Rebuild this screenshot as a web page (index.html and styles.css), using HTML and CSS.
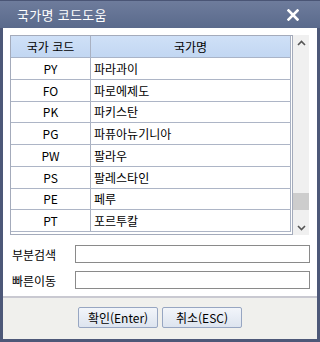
FILE: index.html
```html
<!DOCTYPE html>
<html lang="ko">
<head>
<meta charset="utf-8">
<link rel="stylesheet" href="styles.css">
</head>
<body>
<div class="win">
  <div class="title">
    <span class="title-text">국가명 코드도움</span>
    <svg class="close" width="12" height="12" viewBox="0 0 12 12"><path d="M1.5 1.5 L10.5 10.5 M10.5 1.5 L1.5 10.5" stroke="#fff" stroke-width="2.6" stroke-linecap="square"/></svg>
  </div>
  <div class="content">
    <div class="gridwrap">
      <div class="grid">
        <div class="row head"><div class="c1">국가 코드</div><div class="c2 center">국가명</div></div>
        <div class="row"><div class="c1">PY</div><div class="c2">파라과이</div></div>
        <div class="row"><div class="c1">FO</div><div class="c2">파로에제도</div></div>
        <div class="row"><div class="c1">PK</div><div class="c2">파키스탄</div></div>
        <div class="row"><div class="c1">PG</div><div class="c2">파퓨아뉴기니아</div></div>
        <div class="row"><div class="c1">PW</div><div class="c2">팔라우</div></div>
        <div class="row"><div class="c1">PS</div><div class="c2">팔레스타인</div></div>
        <div class="row"><div class="c1">PE</div><div class="c2">페루</div></div>
        <div class="row"><div class="c1">PT</div><div class="c2">포르투칼</div></div>
      </div>
      <div class="scroll">
        <svg class="arrow" width="9" height="6" viewBox="0 0 9 6"><path d="M1 5 L4.5 1.5 L8 5" fill="none" stroke="#555" stroke-width="1.6"/></svg>
        <div class="track"><div class="thumb"></div></div>
        <svg class="arrow" width="9" height="6" viewBox="0 0 9 6"><path d="M1 1 L4.5 4.5 L8 1" fill="none" stroke="#555" stroke-width="1.6"/></svg>
      </div>
    </div>
    <div class="form">
      <div class="frow"><span class="lbl">부분검색</span><div class="inp"></div></div>
      <div class="frow"><span class="lbl">빠른이동</span><div class="inp"></div></div>
    </div>
    <div class="footer">
      <button class="btn">확인(Enter)</button>
      <button class="btn">취소(ESC)</button>
    </div>
  </div>
</div>
</body>
</html>
```
FILE: styles.css
```css
* { box-sizing: border-box; }
html, body { margin: 0; padding: 0; }
body { font-family: "Noto Sans CJK KR", "Noto Sans", sans-serif; font-size: 12px; color: #000; }
.win {
  width: 320px; height: 342px;
  background: #4d5878;
  display: flex; flex-direction: column;
  padding-bottom: 3px;
}
.title {
  height: 28px; flex: none;
  background: linear-gradient(#6e7c9c, #5a6a8c);
  border-top: 1px solid #4a5575;
  display: flex; align-items: center; justify-content: space-between;
  padding: 0 21px 0 17px;
  color: #fff;
}
.title-text { font-size: 13px; letter-spacing: 0.3px; }
.close { display: block; }
.content {
  flex: 1; margin: 0 3px;
  background: #fff;
  display: flex; flex-direction: column;
}
.gridwrap {
  margin: 7px 8px 0 7px;
  height: 200px;
  display: flex;
}
.grid {
  width: 284px;
  border: 1px solid #a4abbb;
  padding: 0 1px 1px 0;
  display: flex; flex-direction: column;
}
.row {
  display: flex;
  height: 21.75px;
  border-bottom: 1px solid #adb5c6;
  align-items: center;
}
.row.head {
  height: 22px;
  background: linear-gradient(#cfe0f7, #c2d7f2);
  border-bottom: 1px solid #a9b4c8;
}
.c1 {
  width: 80px; height: 100%;
  border-right: 1px solid #a9b1c2;
  display: flex; align-items: center; justify-content: center;
  font-size: 12px;
}
.c2 {
  flex: 1; height: 100%;
  border-right: 1px solid #a9b1c2;
  display: flex; align-items: center;
  padding-left: 3px;
}
.c2.center { justify-content: center; padding-left: 0; }
.scroll {
  width: 16px; margin-left: 0;
  height: 200px;
  background: #f0f0f0;
  display: flex; flex-direction: column; align-items: center;
  padding: 5px 0 4px;
}
.arrow { display: block; flex: none; }
.track { flex: 1; width: 16px; position: relative; }
.thumb { position: absolute; left: 0; right: 0; top: 147px; height: 17px; background: #cdcdcd; }
.form {
  padding: 10px 7px 0 9px;
  display: flex; flex-direction: column; gap: 8px;
  height: 61px;
}
.frow { display: flex; align-items: center; height: 18px; }
.lbl { width: 63px; font-size: 12px; }
.inp { width: 236px; height: 18px; border: 1px solid #8a8a8a; background: #fff; }
.footer {
  flex: 1;
  border-top: 2px solid #c9c9d1;
  background: #f0f0ed;
  display: flex; justify-content: center; align-items: flex-start;
  gap: 4px;
  padding-top: 9px;
}
.btn {
  width: 80px; height: 21px;
  font-family: inherit; font-size: 12px; color: #000;
  border: 1px solid #97a6c2;
  border-radius: 2px;
  background: linear-gradient(#f2f5fa, #dde4ef);
  padding: 0;
}
```
